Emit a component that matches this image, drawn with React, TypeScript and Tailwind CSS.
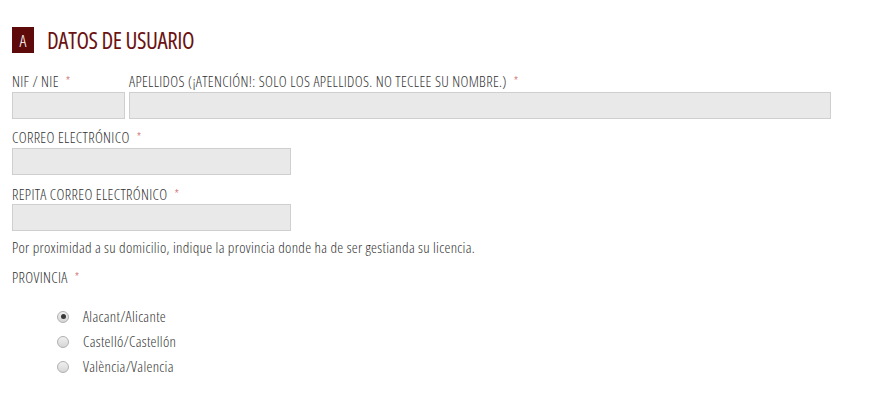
import React from 'react';

const font = { fontFamily: '"Open Sans", "Liberation Sans Narrow", sans-serif' };

function Req() {
  return <span className="ml-[7px] text-[#c4474a] text-[12px] relative -top-[1px]">*</span>;
}

function Label({ children }: { children: React.ReactNode }) {
  return (
    <div className="h-[20px] flex items-baseline text-[15px] leading-[20px] tracking-[0.33px] text-[#333] uppercase whitespace-nowrap">
      {children}
      <Req />
    </div>
  );
}

function Field({ className }: { className: string }) {
  return <div className={`h-[27px] bg-[#e9e9e9] border border-[#cfcfcf] ${className}`} />;
}

const provincias = ['Alacant/Alicante', 'Castelló/Castellón', 'València/Valencia'];

export default function App() {
  return (
    <div className="w-[895px] h-[401px] bg-white pl-[12px] pt-[27px] font-stretch-condensed font-light" style={font}>
      {/* Header */}
      <div className="flex items-center gap-[13px] h-[26px]">
        <div className="w-[22px] h-[26px] bg-[#5e0a0a] text-white text-[17px] leading-none flex items-center justify-center">A</div>
        <h2 className="text-[23px] leading-[26px] text-[#6b1212] tracking-[-0.4px] font-normal">DATOS DE USUARIO</h2>
      </div>

      {/* NIF + Apellidos */}
      <div className="flex gap-[4px] mt-[18px]">
        <div className="w-[113px]">
          <Label>NIF / NIE</Label>
          <Field className="w-[113px] mt-[1px]" />
        </div>
        <div className="w-[702px]">
          <Label>Apellidos (¡Atención!: solo los apellidos. No teclee su nombre.)</Label>
          <Field className="w-[702px] mt-[1px]" />
        </div>
      </div>

      <div className="mt-[8px]">
        <Label>Correo electrónico</Label>
        <Field className="w-[279px] mt-[1px]" />
      </div>

      <div className="mt-[9px]">
        <Label>Repita correo electrónico</Label>
        <Field className="w-[279px]" />
      </div>

      <p className="mt-[6px] text-[15px] leading-[20px] tracking-[0.3px] text-[#333]">
        Por proximidad a su domicilio, indique la provincia donde ha de ser gestianda su licencia.
      </p>

      <div className="mt-[10px]">
        <Label>Provincia</Label>
      </div>

      <div className="mt-[17px] pl-[45px] flex flex-col">
        {provincias.map((p, i) => (
          <label key={p} className="flex items-center gap-[14px] h-[25px] text-[15px] tracking-[0.3px] text-[#333]">
            <span className="w-[12px] h-[12px] rounded-full border border-[#b0b0b0] bg-gradient-to-b from-[#f0f0f0] to-[#d6d6d6] flex items-center justify-center">
              {i === 0 && <span className="w-[5px] h-[5px] rounded-full bg-[#3a3a3a]" />}
            </span>
            {p}
          </label>
        ))}
      </div>
    </div>
  );
}
